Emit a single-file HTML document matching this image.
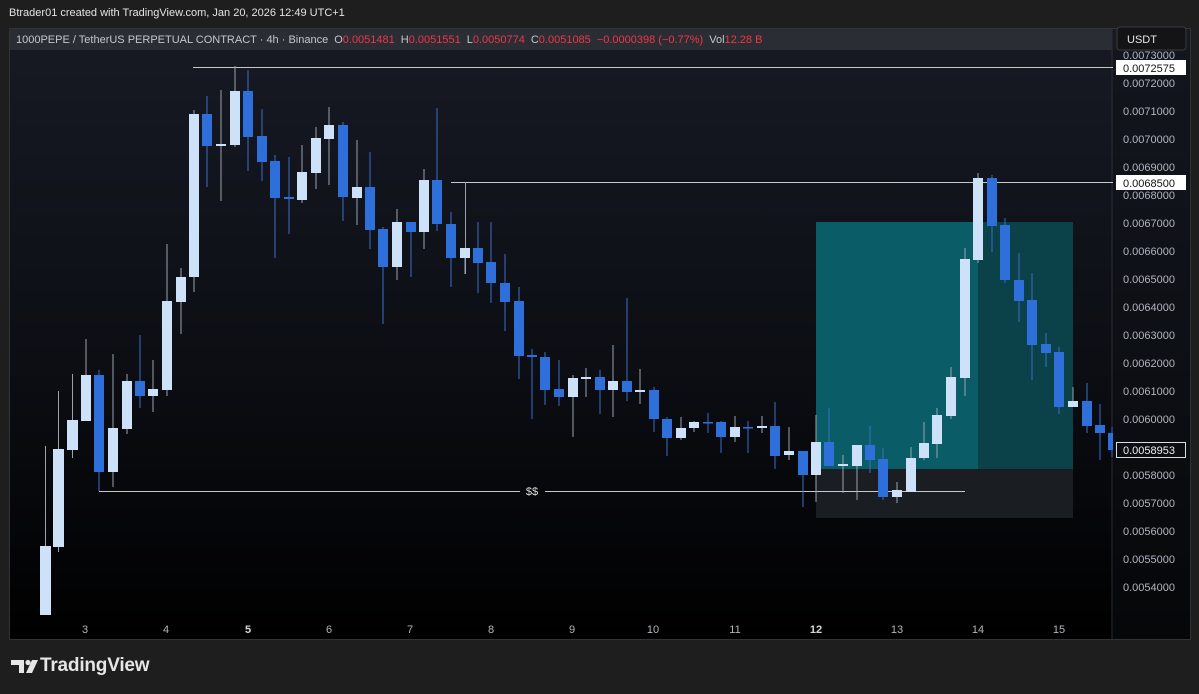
<!DOCTYPE html>
<html><head><meta charset="utf-8"><style>
html,body{margin:0;padding:0;background:#1e1e1e;width:1199px;height:694px;overflow:hidden;font-family:"Liberation Sans",sans-serif}
.hdr{position:absolute;left:9px;top:7px;font-size:11px;color:#e4e4e4}
.logo{position:absolute;left:40px;top:655px;font-size:19px;font-weight:bold;color:#e6e6e6;letter-spacing:-0.2px}
svg{position:absolute;left:0;top:0}
.u{fill:#cde1f8}.d{fill:#2f6fd9}
.uw{stroke:#9aa3ad;stroke-width:1}.dw{stroke:#3a6fc8;stroke-width:1}
.ax{font-size:11px;fill:#b2b5be;font-family:"Liberation Sans",sans-serif}
</style></head><body>
<div class="hdr">Btrader01 created with TradingView.com, Jan 20, 2026 12:49 UTC+1</div>
<svg width="1199" height="694" viewBox="0 0 1199 694">
<defs><linearGradient id="bg" x1="0" y1="0" x2="0" y2="1"><stop offset="0" stop-color="#171a24"/><stop offset="0.55" stop-color="#0c0e14"/><stop offset="1" stop-color="#000"/></linearGradient></defs>
<rect x="9" y="28" width="1182" height="612" fill="url(#bg)"/>
<rect x="9" y="28" width="1103" height="22" fill="#2a2d34"/>
<text x="16" y="43" font-size="11" fill="#c3c6cc" font-family="Liberation Sans,sans-serif">1000PEPE / TetherUS PERPETUAL CONTRACT · 4h · Binance<tspan dx="6">O</tspan><tspan fill="#f23645">0.0051481</tspan><tspan dx="6">H</tspan><tspan fill="#f23645">0.0051551</tspan><tspan dx="6">L</tspan><tspan fill="#f23645">0.0050774</tspan><tspan dx="6">C</tspan><tspan fill="#f23645">0.0051085</tspan><tspan dx="6" fill="#f23645">−0.0000398 (−0.77%)</tspan><tspan dx="6">Vol</tspan><tspan fill="#f23645">12.28 B</tspan></text>
<line x1="1112" y1="28" x2="1112" y2="640" stroke="#2a2d34"/>
<rect x="9.5" y="28.5" width="1181" height="611" fill="none" stroke="#333"/>
<rect x="816" y="222" width="162" height="247" fill="#0a5d66"/>
<rect x="978" y="222" width="95" height="247" fill="#0b4249"/>
<rect x="816" y="469" width="257" height="49" fill="#1a1d22"/>
<line x1="193" y1="67.5" x2="1113" y2="67.5" stroke="#c8c8c8"/>
<line x1="451" y1="182.5" x2="1113" y2="182.5" stroke="#c8c8c8"/>
<line x1="465.5" y1="182" x2="465.5" y2="274" stroke="#9aa3ad"/>
<line x1="99" y1="491.5" x2="520" y2="491.5" stroke="#c8c8c8"/>
<line x1="545" y1="491.5" x2="965" y2="491.5" stroke="#c8c8c8"/>
<text x="532" y="495" font-size="11" fill="#ddd" text-anchor="middle" font-family="Liberation Sans,sans-serif">$$</text>
<g>
<line class="uw" x1="45.5" y1="446" x2="45.5" y2="615"/><rect class="u" x="40" y="546" width="11" height="69"/>
<line class="uw" x1="58.5" y1="391" x2="58.5" y2="552"/><rect class="u" x="53" y="449" width="11" height="98"/>
<line class="uw" x1="72.5" y1="374" x2="72.5" y2="458"/><rect class="u" x="67" y="420" width="11" height="30"/>
<line class="uw" x1="86" y1="339" x2="86" y2="421"/><rect class="u" x="81" y="375" width="10" height="46"/>
<line class="dw" x1="99" y1="370" x2="99" y2="491"/><rect class="d" x="94" y="375" width="10" height="97"/>
<line class="uw" x1="113" y1="354" x2="113" y2="487"/><rect class="u" x="108" y="428" width="10" height="44"/>
<line class="uw" x1="127" y1="374" x2="127" y2="434"/><rect class="u" x="122" y="381" width="10" height="48"/>
<line class="dw" x1="140" y1="335" x2="140" y2="408"/><rect class="d" x="135" y="381" width="10" height="15"/>
<line class="uw" x1="153" y1="360" x2="153" y2="412"/><rect class="u" x="148" y="389" width="10" height="7"/>
<line class="uw" x1="167" y1="244" x2="167" y2="396"/><rect class="u" x="162" y="301" width="10" height="89"/>
<line class="uw" x1="181" y1="268" x2="181" y2="334"/><rect class="u" x="176" y="277" width="10" height="25"/>
<line class="uw" x1="194" y1="110" x2="194" y2="292"/><rect class="u" x="189" y="114" width="10" height="163"/>
<line class="dw" x1="207" y1="96" x2="207" y2="187"/><rect class="d" x="202" y="114" width="10" height="32"/>
<line class="uw" x1="221" y1="90" x2="221" y2="201"/><rect class="u" x="216" y="144" width="10" height="2"/>
<line class="uw" x1="235" y1="66" x2="235" y2="147"/><rect class="u" x="230" y="91" width="10" height="54"/>
<line class="dw" x1="248" y1="70" x2="248" y2="171"/><rect class="d" x="243" y="91" width="10" height="46"/>
<line class="dw" x1="262" y1="109" x2="262" y2="181"/><rect class="d" x="257" y="136" width="10" height="26"/>
<line class="dw" x1="275" y1="155" x2="275" y2="258"/><rect class="d" x="270" y="161" width="10" height="37"/>
<line class="dw" x1="289" y1="157" x2="289" y2="234"/><rect class="d" x="284" y="197" width="10" height="2"/>
<line class="uw" x1="302" y1="145" x2="302" y2="203"/><rect class="u" x="297" y="172" width="10" height="28"/>
<line class="uw" x1="316" y1="127" x2="316" y2="189"/><rect class="u" x="311" y="138" width="10" height="35"/>
<line class="uw" x1="329" y1="107" x2="329" y2="185"/><rect class="u" x="324" y="125" width="10" height="14"/>
<line class="dw" x1="343" y1="122" x2="343" y2="221"/><rect class="d" x="338" y="125" width="10" height="72"/>
<line class="uw" x1="357" y1="140" x2="357" y2="225"/><rect class="u" x="352" y="187" width="10" height="11"/>
<line class="dw" x1="370" y1="152" x2="370" y2="249"/><rect class="d" x="365" y="187" width="10" height="43"/>
<line class="dw" x1="383" y1="227" x2="383" y2="324"/><rect class="d" x="378" y="229" width="10" height="38"/>
<line class="uw" x1="397" y1="209" x2="397" y2="280"/><rect class="u" x="392" y="222" width="10" height="45"/>
<line class="dw" x1="411" y1="222" x2="411" y2="277"/><rect class="d" x="406" y="222" width="10" height="10"/>
<line class="uw" x1="424" y1="169" x2="424" y2="249"/><rect class="u" x="419" y="180" width="10" height="52"/>
<line class="dw" x1="437" y1="108" x2="437" y2="231"/><rect class="d" x="432" y="180" width="10" height="44"/>
<line class="dw" x1="451" y1="212" x2="451" y2="287"/><rect class="d" x="446" y="224" width="10" height="34"/>
<line class="uw" x1="465" y1="248" x2="465" y2="274"/><rect class="u" x="460" y="248" width="10" height="10"/>
<line class="dw" x1="478" y1="222" x2="478" y2="293"/><rect class="d" x="473" y="248" width="10" height="15"/>
<line class="dw" x1="491" y1="222" x2="491" y2="303"/><rect class="d" x="486" y="262" width="10" height="21"/>
<line class="dw" x1="505" y1="254" x2="505" y2="331"/><rect class="d" x="500" y="283" width="10" height="19"/>
<line class="dw" x1="519" y1="287" x2="519" y2="379"/><rect class="d" x="514" y="301" width="10" height="55"/>
<line class="dw" x1="532" y1="349" x2="532" y2="419"/><rect class="d" x="527" y="355" width="10" height="2"/>
<line class="dw" x1="545" y1="352" x2="545" y2="405"/><rect class="d" x="540" y="357" width="10" height="33"/>
<line class="dw" x1="559" y1="360" x2="559" y2="406"/><rect class="d" x="554" y="389" width="10" height="8"/>
<line class="uw" x1="573" y1="375" x2="573" y2="437"/><rect class="u" x="568" y="378" width="10" height="19"/>
<line class="uw" x1="586" y1="368" x2="586" y2="397"/><rect class="u" x="581" y="377" width="10" height="2"/>
<line class="dw" x1="600" y1="370" x2="600" y2="414"/><rect class="d" x="595" y="377" width="10" height="13"/>
<line class="uw" x1="613" y1="345" x2="613" y2="417"/><rect class="u" x="608" y="381" width="10" height="9"/>
<line class="dw" x1="627" y1="298" x2="627" y2="401"/><rect class="d" x="622" y="381" width="10" height="11"/>
<line class="uw" x1="640" y1="369" x2="640" y2="404"/><rect class="u" x="635" y="390" width="10" height="2"/>
<line class="dw" x1="654" y1="387" x2="654" y2="432"/><rect class="d" x="649" y="390" width="10" height="29"/>
<line class="dw" x1="667" y1="417" x2="667" y2="456"/><rect class="d" x="662" y="419" width="10" height="19"/>
<line class="uw" x1="681" y1="417" x2="681" y2="440"/><rect class="u" x="676" y="428" width="10" height="10"/>
<line class="uw" x1="694" y1="421" x2="694" y2="432"/><rect class="u" x="689" y="422" width="10" height="6"/>
<line class="dw" x1="708" y1="413" x2="708" y2="433"/><rect class="d" x="703" y="422" width="10" height="1.5"/>
<line class="dw" x1="721" y1="421" x2="721" y2="453"/><rect class="d" x="716" y="422" width="10" height="15"/>
<line class="uw" x1="735" y1="416" x2="735" y2="442"/><rect class="u" x="730" y="427" width="10" height="10"/>
<line class="dw" x1="748" y1="421" x2="748" y2="453"/><rect class="d" x="743" y="427" width="10" height="1.5"/>
<line class="uw" x1="762" y1="416" x2="762" y2="433"/><rect class="u" x="757" y="426" width="10" height="2"/>
<line class="dw" x1="775" y1="402" x2="775" y2="469"/><rect class="d" x="770" y="426" width="10" height="30"/>
<line class="uw" x1="789" y1="427" x2="789" y2="460"/><rect class="u" x="784" y="451" width="10" height="4"/>
<line class="dw" x1="803" y1="451" x2="803" y2="507"/><rect class="d" x="798" y="451" width="10" height="24"/>
<line class="uw" x1="816" y1="415" x2="816" y2="502"/><rect class="u" x="811" y="442" width="10" height="33"/>
<line class="dw" x1="829" y1="408" x2="829" y2="466"/><rect class="d" x="824" y="442" width="10" height="24"/>
<line class="uw" x1="843" y1="455" x2="843" y2="493"/><rect class="u" x="838" y="464" width="10" height="2"/>
<line class="uw" x1="857" y1="445" x2="857" y2="500"/><rect class="u" x="852" y="445" width="10" height="21"/>
<line class="dw" x1="870" y1="426" x2="870" y2="473"/><rect class="d" x="865" y="445" width="10" height="15"/>
<line class="dw" x1="883" y1="448" x2="883" y2="500"/><rect class="d" x="878" y="459" width="10" height="38"/>
<line class="uw" x1="897" y1="482" x2="897" y2="503"/><rect class="u" x="892" y="490" width="10" height="7"/>
<line class="uw" x1="911" y1="447" x2="911" y2="492"/><rect class="u" x="906" y="458" width="10" height="34"/>
<line class="uw" x1="924" y1="422" x2="924" y2="460"/><rect class="u" x="919" y="443" width="10" height="15"/>
<line class="uw" x1="937" y1="408" x2="937" y2="458"/><rect class="u" x="932" y="415" width="10" height="29"/>
<line class="uw" x1="951" y1="367" x2="951" y2="419"/><rect class="u" x="946" y="377" width="10" height="39"/>
<line class="uw" x1="965" y1="248" x2="965" y2="396"/><rect class="u" x="960" y="259" width="10" height="119"/>
<line class="uw" x1="978" y1="173" x2="978" y2="263"/><rect class="u" x="973" y="178" width="10" height="82"/>
<line class="dw" x1="992" y1="175" x2="992" y2="252"/><rect class="d" x="987" y="178" width="10" height="48"/>
<line class="dw" x1="1005" y1="218" x2="1005" y2="283"/><rect class="d" x="1000" y="225" width="10" height="55"/>
<line class="dw" x1="1019" y1="253" x2="1019" y2="322"/><rect class="d" x="1014" y="280" width="10" height="21"/>
<line class="dw" x1="1032" y1="273" x2="1032" y2="380"/><rect class="d" x="1027" y="300" width="10" height="45"/>
<line class="dw" x1="1046" y1="333" x2="1046" y2="367"/><rect class="d" x="1041" y="344" width="10" height="9"/>
<line class="dw" x1="1059" y1="347" x2="1059" y2="414"/><rect class="d" x="1054" y="352" width="10" height="55"/>
<line class="uw" x1="1073" y1="387" x2="1073" y2="407"/><rect class="u" x="1068" y="401" width="10" height="6"/>
<line class="dw" x1="1087" y1="383" x2="1087" y2="433"/><rect class="d" x="1082" y="401" width="10" height="25"/>
<line class="dw" x1="1100" y1="404" x2="1100" y2="460"/><rect class="d" x="1095" y="425" width="10" height="8"/>
<line class="dw" x1="1112" y1="427" x2="1112" y2="457"/><rect class="d" x="1108" y="433" width="5" height="17"/>
</g>
<rect x="1113" y="50" width="77" height="589" fill="#0f1117" opacity="0.4"/>
<g class="ax">
<text x="1123" y="59">0.0073000</text>
<text x="1123" y="87">0.0072000</text>
<text x="1123" y="115">0.0071000</text>
<text x="1123" y="143">0.0070000</text>
<text x="1123" y="171">0.0069000</text>
<text x="1123" y="199">0.0068000</text>
<text x="1123" y="227">0.0067000</text>
<text x="1123" y="255">0.0066000</text>
<text x="1123" y="283">0.0065000</text>
<text x="1123" y="311">0.0064000</text>
<text x="1123" y="339">0.0063000</text>
<text x="1123" y="367">0.0062000</text>
<text x="1123" y="395">0.0061000</text>
<text x="1123" y="423">0.0060000</text>
<text x="1123" y="479">0.0058000</text>
<text x="1123" y="507">0.0057000</text>
<text x="1123" y="535">0.0056000</text>
<text x="1123" y="563">0.0055000</text>
<text x="1123" y="591">0.0054000</text>
</g>
<rect x="1117" y="27" width="69" height="23" rx="3" fill="#141416" stroke="#3a3a3d"/>
<text x="1127" y="43" font-size="11" fill="#e6e6e6" font-family="Liberation Sans,sans-serif">USDT</text>
<rect x="1116" y="60" width="70" height="15" fill="#fff"/>
<text x="1123" y="72" font-size="11" fill="#111" font-family="Liberation Sans,sans-serif">0.0072575</text>
<rect x="1116" y="175" width="70" height="15" fill="#fff"/>
<text x="1123" y="187" font-size="11" fill="#111" font-family="Liberation Sans,sans-serif">0.0068500</text>
<rect x="1116.5" y="442.5" width="69" height="15" fill="#0b0d12" stroke="#ddd"/>
<text x="1123" y="454" font-size="11" fill="#eee" font-family="Liberation Sans,sans-serif">0.0058953</text>
<g class="ax" text-anchor="middle">
<text x="85" y="633">3</text><text x="166" y="633">4</text><text x="248" y="633" font-weight="bold" fill="#d5d7dc">5</text>
<text x="329" y="633">6</text><text x="410" y="633">7</text><text x="491" y="633">8</text><text x="572" y="633">9</text>
<text x="653" y="633">10</text><text x="735" y="633">11</text><text x="816" y="633" font-weight="bold" fill="#d5d7dc">12</text>
<text x="897" y="633">13</text><text x="978" y="633">14</text><text x="1059" y="633">15</text>
</g>
<!-- TV logo icon -->
<g fill="#e6e6e6">
<path d="M11 660h13v13h-5v-8h-8z"/>
<circle cx="28" cy="662.5" r="2.6"/>
<path d="M32 660h6l-6 13h-6z"/>
</g>
</svg>
<div class="logo">TradingView</div>
</body></html>
